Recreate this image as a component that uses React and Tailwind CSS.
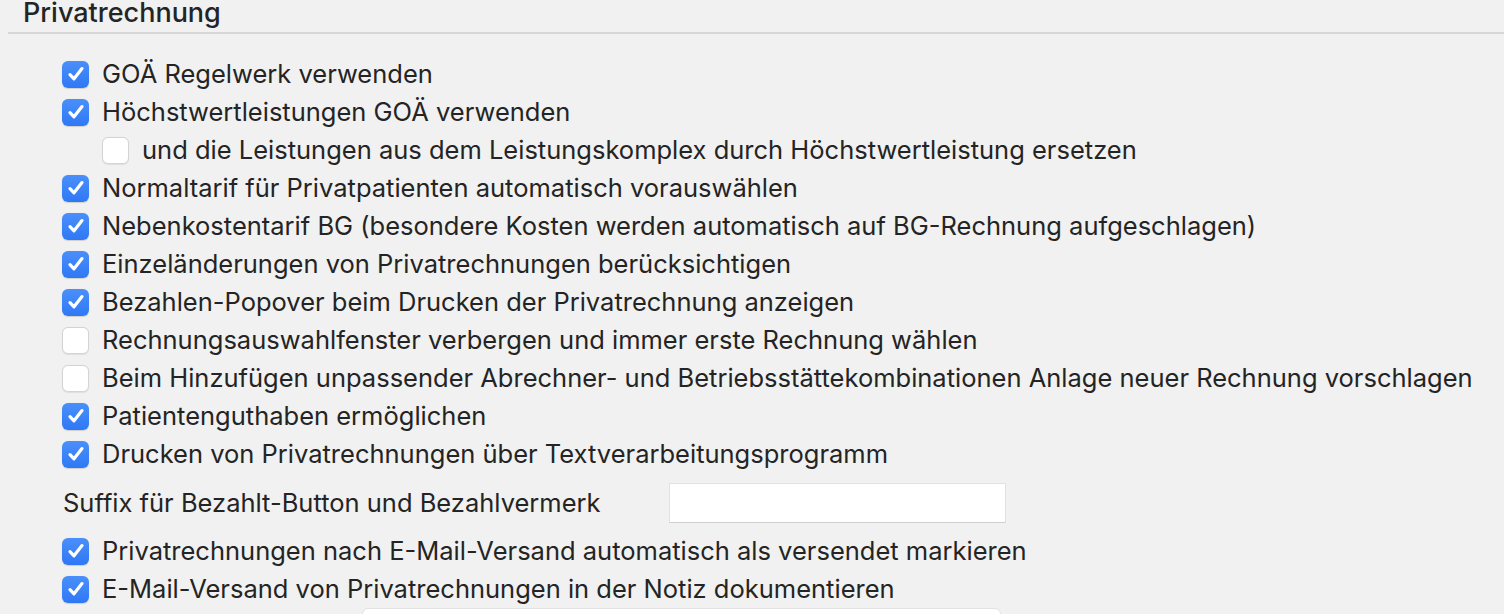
import React from "react";

const rows = [
  { c: true, t: "GOÄ Regelwerk verwenden" },
  { c: true, t: "Höchstwertleistungen GOÄ verwenden" },
  { c: false, t: "und die Leistungen aus dem Leistungskomplex durch Höchstwertleistung ersetzen", indent: true },
  { c: true, t: "Normaltarif für Privatpatienten automatisch vorauswählen" },
  { c: true, t: "Nebenkostentarif BG (besondere Kosten werden automatisch auf BG-Rechnung aufgeschlagen)" },
  { c: true, t: "Einzeländerungen von Privatrechnungen berücksichtigen" },
  { c: true, t: "Bezahlen-Popover beim Drucken der Privatrechnung anzeigen" },
  { c: false, t: "Rechnungsauswahlfenster verbergen und immer erste Rechnung wählen" },
  { c: false, t: "Beim Hinzufügen unpassender Abrechner- und Betriebsstättekombinationen Anlage neuer Rechnung vorschlagen" },
  { c: true, t: "Patientenguthaben ermöglichen" },
  { c: true, t: "Drucken von Privatrechnungen über Textverarbeitungsprogramm" },
];

function Box({ checked }) {
  if (checked) {
    return (
      <div className="w-[27px] h-[27px] rounded-[6px] bg-gradient-to-b from-[#4a8ffa] to-[#2f78f5] flex items-center justify-center shrink-0 shadow-[0_0.5px_1px_rgba(0,0,0,0.15)]">
        <svg width="20" height="20" viewBox="0 0 20 20" fill="none">
          <path d="M4 10.6 L8 14.8 L16 4.6" stroke="white" strokeWidth="3.2" strokeLinecap="round" strokeLinejoin="round" />
        </svg>
      </div>
    );
  }
  return (
    <div className="w-[27px] h-[27px] rounded-[6px] bg-white border border-[#d4d4d4] shrink-0 shadow-[0_0.5px_1px_rgba(0,0,0,0.08)]" />
  );
}

function Row({ c, t, indent }) {
  return (
    <div className={`h-[38px] flex items-center gap-[13px] ${indent ? "pl-[102px]" : "pl-[62px]"}`}>
      <Box checked={c} />
      <span className="whitespace-nowrap">{t}</span>
    </div>
  );
}

export default function App() {
  return (
    <div
      className="w-[1504px] h-[614px] overflow-hidden bg-[#f1f1f1] text-[#242424] text-[25.5px] leading-none"
      style={{ fontFamily: "Inter, 'Noto Sans', sans-serif" }}
    >
      <div className="pl-[23px] h-[32px] flex items-end pb-[6px] text-[27px] font-medium">Privatrechnung</div>
      <div className="ml-[8px] h-[2px] bg-[#d7d7d7]" />
      <div className="pt-[21px]">
        {rows.map((r, i) => (
          <Row key={i} {...r} />
        ))}
        <div className="h-[59px] flex items-center pl-[63px]">
          <span className="w-[606px] whitespace-nowrap">Suffix für Bezahlt-Button und Bezahlvermerk</span>
          <div className="w-[337px] h-[40px] bg-white border border-[#e2e2e2] border-b-[#cfcfcf]" />
        </div>
        <Row c={true} t="Privatrechnungen nach E-Mail-Versand automatisch als versendet markieren" />
        <Row c={true} t="E-Mail-Versand von Privatrechnungen in der Notiz dokumentieren" />
        <div className="ml-[362px] w-[639px] h-[20px] bg-white border border-[#e2e2e2] rounded-[6px]" />
      </div>
    </div>
  );
}
